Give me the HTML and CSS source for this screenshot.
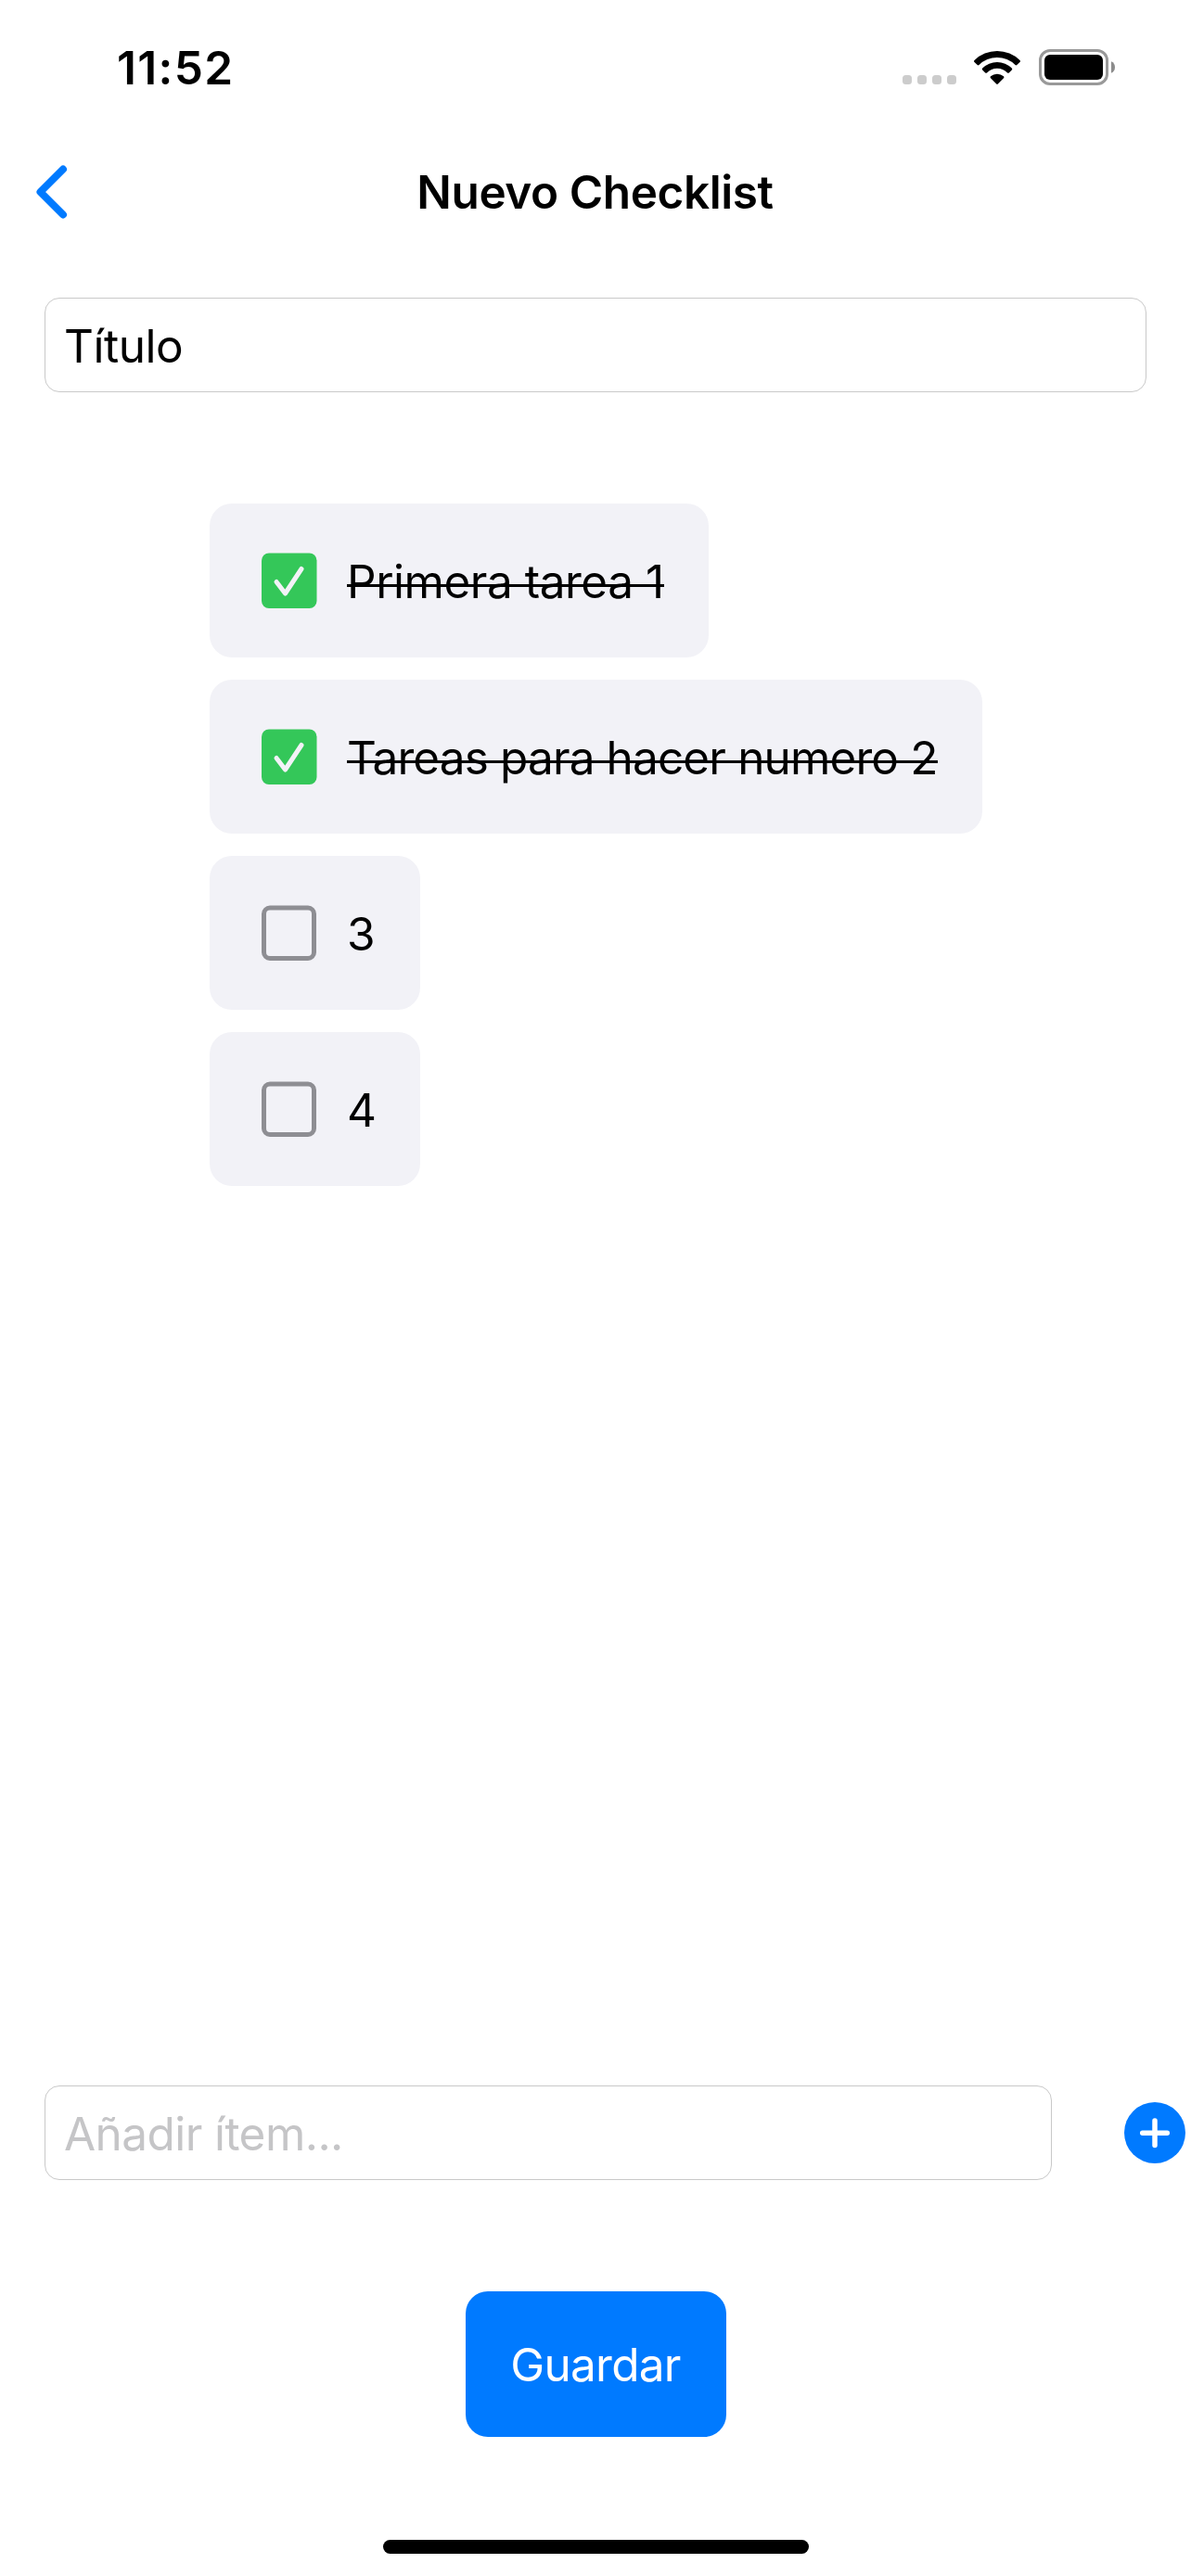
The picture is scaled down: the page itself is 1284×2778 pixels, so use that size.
FILE: index.html
```html
<!DOCTYPE html>
<html lang="es">
<head>
<meta charset="utf-8">
<title>Nuevo Checklist</title>
<link rel="stylesheet" href="styles.css">
</head>
<body>
<div class="screen">
  <div class="status">
    <span class="time">11:52</span>
    <div class="indicators">
      <div class="dots"><i></i><i></i><i></i><i></i></div>
      <svg class="wifi" width="52" height="38" viewBox="0 0 52 38">
        <path d="M1.5 11A35 35 0 0 1 50.5 11Q51.5 12 50.5 13L47.3 16Q46.5 16.8 45.5 16A27.5 27.5 0 0 0 6.5 16Q5.5 16.8 4.7 16L1.500 13Q.5 12 1.500 11Z"/>
        <path d="M10.200 19.500A22.500 22.500 0 0 1 41.800 19.500Q42.800 20.500 41.800 21.500L38.800 24.500Q38 25.200 37 24.500A15 15 0 0 0 15 24.500Q14 25.200 13.200 24.500L10.200 21.500Q9.200 20.500 10.200 19.500Z"/>
        <path d="M19 28.300A10.500 10.500 0 0 1 33 28.300Q34 29.300 33 30.200L26.800 36.500Q26 37.300 25.200 36.500L19 30.200Q18 29.300 19 28.300Z"/>
      </svg>
      <svg class="battery" width="83" height="39" viewBox="0 0 83 39">
        <rect x="1.500" y="1.500" width="72" height="36" rx="10.500" fill="none" stroke="#999" stroke-width="3"/>
        <rect x="6" y="6" width="63" height="27" rx="6"/>
        <path d="M78 13.200Q82 15 82 19.500Q82 24 78 25.800Z" fill="#8c8c8c"/>
      </svg>
    </div>
  </div>

  <header class="nav">
    <svg class="back" width="36" height="60" viewBox="0 0 36 60">
      <path d="M31 5.500L6.500 30L31 54.500"/>
    </svg>
    <h1>Nuevo Checklist</h1>
  </header>

  <div class="field title-field">Título</div>

  <ul class="list">
    <li class="item done"><svg class="box" viewBox="0 0 60 60"><rect x="0" y=".5" width="59.500" height="59.500" rx="8" fill="#34c759"/><path d="M16 31.500L25.500 44L43 17.500" class="check"/></svg><span class="label first">Primera tarea 1</span></li>
    <li class="item done"><svg class="box" viewBox="0 0 60 60"><rect x="0" y=".5" width="59.500" height="59.500" rx="8" fill="#34c759"/><path d="M16 31.500L25.500 44L43 17.500" class="check"/></svg><span class="label second">Tareas para hacer numero 2</span></li>
    <li class="item"><svg class="box" viewBox="0 0 60 60"><rect x="2.500" y="3" width="54" height="54.500" rx="6.500" class="empty"/></svg><span class="label">3</span></li>
    <li class="item"><svg class="box" viewBox="0 0 60 60"><rect x="2.500" y="3" width="54" height="54.500" rx="6.500" class="empty"/></svg><span class="label four">4</span></li>
  </ul>

  <div class="add-row">
    <div class="field placeholder">Añadir ítem...</div>
    <svg class="plus" width="66" height="66" viewBox="0 0 66 66">
      <circle cx="33" cy="33" r="33"/>
      <path d="M33 20V46.500M19.700 33.200H46.300"/>
    </svg>
  </div>

  <div class="save">Guardar</div>
  <div class="home"></div>
</div>
</body>
</html>
```
FILE: styles.css
```css
* { box-sizing: border-box; margin: 0; padding: 0; }

body {
  background: #fff;
  color: #000;
  font: 400 49.5px/60px Inter, "Liberation Sans", sans-serif;
}

svg { display: block; flex: none; }

.screen {
  width: 1284px;
  height: 2778px;
  display: flex;
  flex-direction: column;
  overflow: hidden;
}

.status {
  height: 141px;
  padding: 43px 81px 0 126px;
  display: flex;
  justify-content: space-between;
  align-items: flex-start;
}
.time { font-weight: 600; letter-spacing: 1.35px; }
.indicators { display: flex; padding-top: 10px; }
.dots { display: flex; gap: 6px; padding-top: 28px; margin-right: 18px; }
.dots i { width: 10px; height: 10px; border-radius: 3.5px; background: #ccc; }
.wifi { margin: 1px 19px 0 0; }

.nav {
  height: 132px;
  padding: 0 38px 0 37px;
  display: grid;
  grid-template-columns: 36px 1fr 36px;
  align-items: center;
}
.back path {
  fill: none;
  stroke: #007aff;
  stroke-width: 8;
  stroke-linecap: round;
  stroke-linejoin: round;
}
.nav h1 {
  font-size: 49.5px;
  font-weight: 600;
  text-align: center;
  letter-spacing: -0.42px;
}

.field {
  height: 102px;
  padding: 21px 20px 0;
  border: 1px solid #c9c9c9;
  border-radius: 16px;
  letter-spacing: -0.48px;
}
.title-field { margin: 48px 48px 0; }

.list {
  list-style: none;
  margin: 120px 0 0 226px;
  display: flex;
  flex-direction: column;
  align-items: flex-start;
  gap: 24px;
}
.item {
  height: 166px;
  padding: 0 48px 0 56px;
  display: flex;
  align-items: center;
  gap: 32px;
  border-radius: 24px;
  background: #f2f2f7;
}
.box { width: 60px; height: 60px; }
.check {
  fill: none;
  stroke: #f2f2f7;
  stroke-width: 5;
  stroke-linecap: round;
  stroke-linejoin: round;
}
.empty { fill: none; stroke: #8e8e93; stroke-width: 5; }
.label { padding-top: 2px; white-space: nowrap; }
/* Strike line sits slightly below the font's own line-through position */
.done .label { position: relative; }
.done .label::after {
  content: "";
  position: absolute;
  left: 0;
  right: 0;
  top: 35px;
  height: 3px;
  background: #000;
}
.first { letter-spacing: -0.48px; }
.second { letter-spacing: -0.87px; }
.four { letter-spacing: -1px; }

.add-row {
  margin: auto 6px 0 48px;
  display: flex;
  align-items: center;
  justify-content: space-between;
}
.placeholder {
  width: 1086px;
  color: #c5c5c7;
  letter-spacing: -0.57px;
}
.plus circle { fill: #007aff; }
.plus path { stroke: #fff; stroke-width: 5.5; stroke-linecap: round; }

.save {
  width: 281px;
  height: 157px;
  margin: 120px 0 0 502px;
  padding: 49px 1px 0 0;
  border-radius: 24px;
  background: #007aff;
  color: #fff;
  text-align: center;
  letter-spacing: -0.75px;
}

.home {
  width: 459px;
  height: 15px;
  margin: 111px 0 24px 413px;
  border-radius: 8px;
  background: #000;
}
```
